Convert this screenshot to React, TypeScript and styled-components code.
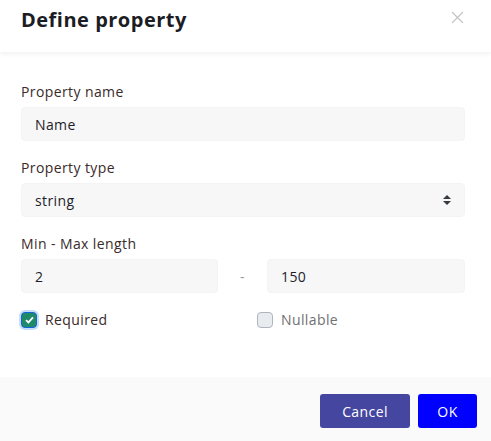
import React from 'react';
import styled, { createGlobalStyle } from 'styled-components';

const GlobalStyle = createGlobalStyle`
  html, body {
    margin: 0;
    padding: 0;
    background: #ffffff;
  }
  body {
    font-family: 'Open Sans', 'Liberation Sans', sans-serif;
    letter-spacing: 0.4px;
  }
`;

const App: React.FC = () => {
  return (
    <>
      <GlobalStyle />
      <Dialog>
        <Header>
          <Title>Define property</Title>
          <CloseButton aria-label="Close">
            <svg width="13" height="13" viewBox="0 0 13 13">
              <path d="M1 1L12 12M12 1L1 12" stroke="#c4c4c4" strokeWidth="1.2" />
            </svg>
          </CloseButton>
        </Header>
        <Body>
          <Field>
            <Label>Property name</Label>
            <Input defaultValue="Name" />
          </Field>
          <Field>
            <Label>Property type</Label>
            <SelectBox>
              <span>string</span>
              <svg width="10" height="14" viewBox="0 0 10 14">
                <path d="M5 2L9 6H1Z M5 12L1 8H9Z" fill="#343a40" />
              </svg>
            </SelectBox>
          </Field>
          <Field>
            <Label>Min - Max length</Label>
            <RangeRow>
              <Input defaultValue="2" />
              <Dash>-</Dash>
              <Input defaultValue="150" />
            </RangeRow>
          </Field>
          <CheckRow>
            <CheckLabel>
              <Box checked>
                <svg width="9" height="8" viewBox="0 0 9 8">
                  <path d="M1 4.2L3.4 6.4L8 1.4" stroke="#ffffff" strokeWidth="1.8" fill="none" />
                </svg>
              </Box>
              <CheckText>Required</CheckText>
            </CheckLabel>
            <CheckLabel>
              <Box />
              <CheckText muted>Nullable</CheckText>
            </CheckLabel>
          </CheckRow>
        </Body>
        <Footer>
          <ActionButton variant="secondary">Cancel</ActionButton>
          <ActionButton variant="primary">OK</ActionButton>
        </Footer>
      </Dialog>
    </>
  );
};

const Dialog = styled.div`
  width: 491px;
  height: 441px;
  display: flex;
  flex-direction: column;
  background: #ffffff;
  overflow: hidden;
`;

const Header = styled.div`
  height: 52px;
  box-sizing: border-box;
  padding: 0 27px 0 21px;
  display: flex;
  align-items: center;
  justify-content: space-between;
  box-shadow: 0 2px 5px rgba(0, 0, 0, 0.06);
  position: relative;
  z-index: 1;
`;

const Title = styled.h1`
  margin: 0 0 13px;
  font-size: 20px;
  font-weight: 700;
  color: #1c1c24;
  letter-spacing: 0.5px;
`;

const CloseButton = styled.button`
  border: none;
  background: none;
  padding: 0;
  margin-bottom: 18px;
  display: flex;
`;

const Body = styled.div`
  flex: 1;
  padding: 30px 26px 0 21px;
  display: flex;
  flex-direction: column;
`;

const Field = styled.div`
  display: flex;
  flex-direction: column;
  margin-bottom: 17px;
`;

const Label = styled.label`
  font-size: 14px;
  color: #3a2a2a;
  line-height: 20px;
  margin-bottom: 5px;
`;

const Input = styled.input`
  height: 34px;
  box-sizing: border-box;
  width: 100%;
  border: 1px solid #f4f4f4;
  border-radius: 4px;
  background: #f7f7f7;
  padding: 0 13px;
  font-family: inherit;
  font-size: 14px;
  letter-spacing: 0.4px;
  color: #1d1d2b;
  outline: none;
`;

const SelectBox = styled.div`
  height: 34px;
  box-sizing: border-box;
  border: 1px solid #f4f4f4;
  border-radius: 4px;
  background: #f7f7f7;
  padding: 0 12px 0 13px;
  display: flex;
  align-items: center;
  justify-content: space-between;
  font-size: 14px;
  color: #1d1d2b;
`;

const RangeRow = styled.div`
  display: grid;
  grid-template-columns: 197px 1fr 198px;
  align-items: center;
`;

const Dash = styled.span`
  text-align: center;
  color: #999999;
  font-size: 14px;
`;

const CheckRow = styled.div`
  display: grid;
  grid-template-columns: 236px 1fr;
`;

const CheckLabel = styled.label`
  display: flex;
  align-items: center;
  gap: 8px;
`;

const Box = styled.span<{ checked?: boolean }>`
  width: 16px;
  height: 16px;
  box-sizing: border-box;
  border-radius: 4px;
  display: flex;
  align-items: center;
  justify-content: center;
  background: ${({ checked }) => (checked ? '#1f8a6a' : '#e9ecef')};
  border: 1px solid ${({ checked }) => (checked ? '#1565d8' : '#adb5bd')};
  box-shadow: ${({ checked }) => (checked ? '0 0 0 2px #c6ddfb' : 'none')};
`;

const CheckText = styled.span<{ muted?: boolean }>`
  font-size: 14px;
  color: ${({ muted }) => (muted ? '#707070' : '#3a2a2a')};
`;

const Footer = styled.div`
  height: 64px;
  box-sizing: border-box;
  background: #fafafa;
  display: flex;
  align-items: center;
  justify-content: flex-end;
  gap: 8px;
  padding: 4px 14px 0 0;
`;

const ActionButton = styled.button<{ variant: 'primary' | 'secondary' }>`
  height: 34px;
  border: none;
  border-radius: 3px;
  font-family: inherit;
  font-size: 14px;
  font-weight: 500;
  letter-spacing: 0.4px;
  color: #ffffff;
  padding: 0;
  width: ${({ variant }) => (variant === 'primary' ? '59px' : '90px')};
  background: ${({ variant }) => (variant === 'primary' ? '#0000ff' : '#4446a0')};
`;

export default App;
